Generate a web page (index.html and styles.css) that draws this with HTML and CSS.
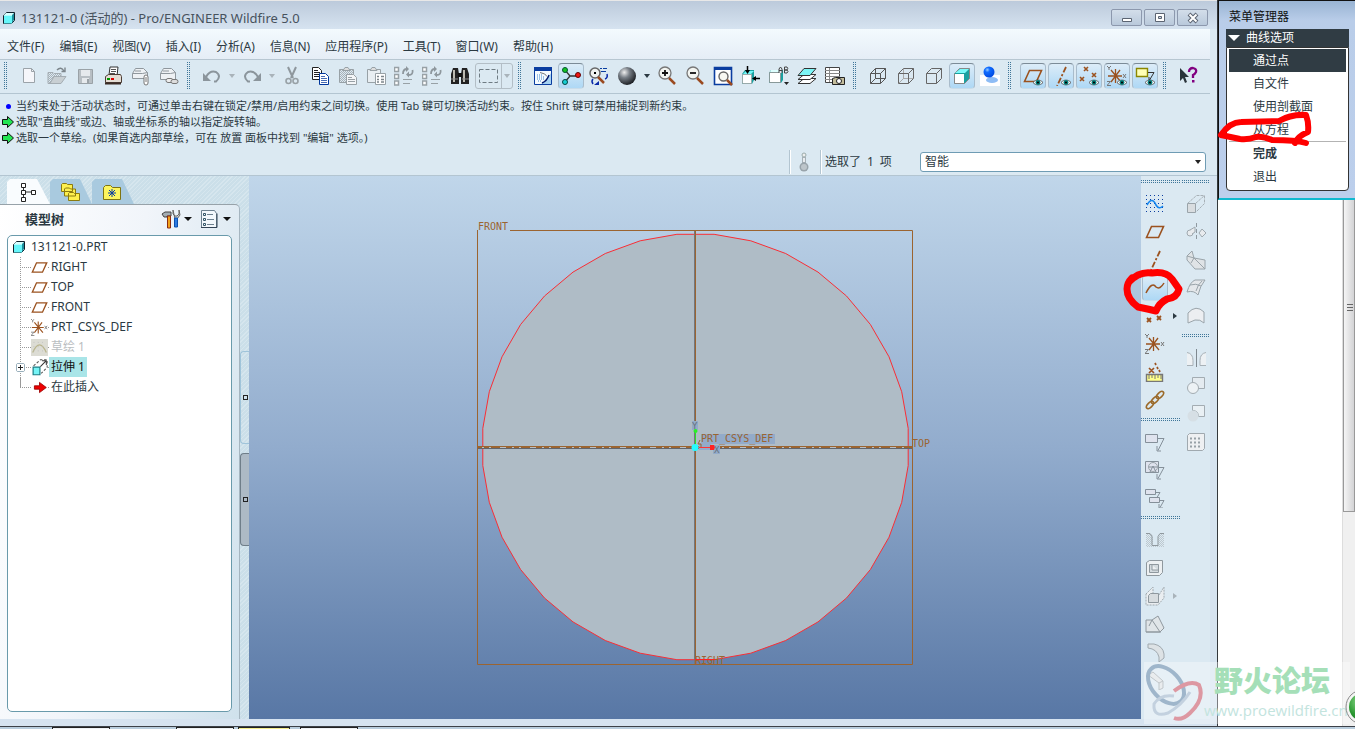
FILE: index.html
```html
<!DOCTYPE html>
<html lang="zh-CN">
<head>
<meta charset="utf-8">
<title>131121-0 (活动的) - Pro/ENGINEER Wildfire 5.0</title>
<link rel="stylesheet" href="styles.css">
</head>
<body>
<svg class="defs" aria-hidden="true">
  <defs>
    <pattern id="hatch" width="2" height="2" patternUnits="userSpaceOnUse"><path d="M0 0h1v1H0zM1 1h1v1H1z" fill="#a9b2b8"/></pattern>
    <radialGradient id="gball" cx=".35" cy=".3" r=".75"><stop offset="0" stop-color="#eee"/><stop offset=".4" stop-color="#777e86"/><stop offset="1" stop-color="#15181c"/></radialGradient>
    <radialGradient id="gblue" cx=".35" cy=".3" r=".75"><stop offset="0" stop-color="#9cf"/><stop offset=".3" stop-color="#0f6cff"/><stop offset="1" stop-color="#0048e0"/></radialGradient>
    <radialGradient id="ggreen" cx=".4" cy=".3" r=".8"><stop offset="0" stop-color="#8fd98c"/><stop offset=".6" stop-color="#2c9a33"/><stop offset="1" stop-color="#12701c"/></radialGradient>
  </defs>
  <symbol id="part" viewBox="0 0 14 14"><path d="M1.500 4.500l3-3h8v8l-3 3h-8z" fill="#fff" stroke="#10202c"/><path d="M2 4.500h8v8H2z" fill="#66f6fa"/><path d="M2 4l2-2h8l-2 2z" fill="#d6ffff"/><path d="M10 4l2-2v7l-2 3z" fill="#1c8f9c"/></symbol>
  <symbol id="eye" viewBox="0 0 11 7"><path d="M0 3.500C3 0 8 0 11 3.500 8 7 3 7 0 3.500z" fill="#fff" stroke="#333" stroke-width=".8"/><circle cx="5.500" cy="3.500" r="2.700" fill="#047f7c"/><circle cx="5.500" cy="3.500" r="1.200" fill="#000"/></symbol>
  <symbol id="new" viewBox="0 0 20 20"><path d="M4.500 2.500h8l3 3v11h-11z" fill="#f5f6fa" stroke="#9ba3a9"/><path d="M12.500 2.500v3h3" fill="none" stroke="#9ba3a9"/></symbol>
  <symbol id="open" viewBox="0 0 20 20"><path d="M1 6.500h5l1 1h7v3H7l-4 7H1z" fill="url(#hatch)" stroke="#a4adb3"/><path d="M7 10.500h12l-5 7H3z" fill="#c8cfd3" stroke="#a4adb3"/><path d="M10 4q4-4 7 1M14.500 5.500h3.500v-4" fill="none" stroke="#7c858b" stroke-width="1.400"/></symbol>
  <symbol id="save" viewBox="0 0 20 20"><path d="M3.500 3.500h14v14h-14z" fill="#b8bfc4" stroke="#9aa2a7"/><path d="M6 4h9v6H6zM7 12h7v5H7z" fill="#e6eaed"/><path d="M12 13h2v4h-2z" fill="#9aa2a7"/></symbol>
  <symbol id="print" viewBox="0 0 20 20"><path d="M6 9l1-8h8l-1 9z" fill="#fff" stroke="#333"/><path d="M8 3.500h5M8 5.500h5M7 7.500h5" stroke="#555"/><path d="M2.500 10.500l3-2h12l1 2v6h-16z" fill="#e4ddd4" stroke="#4c3d35"/><path d="M2 17.500h16" stroke="#3a2c26" stroke-width="2"/><path d="M4 12h3v2H4z" fill="#090"/><path d="M8 12h3v2H8z" fill="#d00"/></symbol>
  <symbol id="mail" viewBox="0 0 20 20"><path d="M1.500 7.500l3-5h8l4 4v6h-15z" fill="#eef1f4" stroke="#8f979d"/><path d="M1.500 7.500h10l5-1M4 5h6" stroke="#8f979d" fill="none"/><rect x="13" y="9" width="4" height="10" rx="2" fill="#fff" stroke="#777"/><path d="M15 11v5" stroke="#777"/></symbol>
  <symbol id="maillink" viewBox="0 0 20 20"><path d="M1.500 7.500l3-5h8l4 4v7h-15z" fill="#eef1f4" stroke="#8f979d"/><path d="M1.500 7.500h10l5-1M4 5h6" stroke="#8f979d" fill="none"/><rect x="7" y="12.500" width="7" height="4" rx="2" fill="#eee" stroke="#777"/><rect x="12" y="13.500" width="7" height="4" rx="2" fill="#ddd" stroke="#777"/></symbol>
  <symbol id="undo" viewBox="0 0 20 20"><path d="M4 11q4-7 10-5 6 4 0 9.500h-2" fill="none" stroke="#8b959c" stroke-width="2"/><path d="M1 7v8h8z" fill="#8b959c"/></symbol>
  <symbol id="redo" viewBox="0 0 20 20"><path d="M16 11q-4-7-10-5-6 4 0 9.500h2" fill="none" stroke="#8b959c" stroke-width="2"/><path d="M19 7v8h-8z" fill="#8b959c"/></symbol>
  <symbol id="cut" viewBox="0 0 20 20"><path d="M6 1l5 11M14 1L9 12" stroke="#8e979d" stroke-width="2"/><circle cx="6.500" cy="15" r="2.500" fill="none" stroke="#98a1a6" stroke-width="1.600"/><circle cx="13.500" cy="15" r="2.500" fill="none" stroke="#98a1a6" stroke-width="1.600"/></symbol>
  <symbol id="copy" viewBox="0 0 20 20"><path d="M2.500 1.500h6l3 3v9h-9z" fill="#fff" stroke="#222"/><path d="M4 4.500h4M4 6.500h6M4 8.500h6M4 10.500h6" stroke="#222"/><path d="M9.500 7.500h6l3 3v8h-9z" fill="#fff" stroke="#00369c"/><path d="M11 10.500h4M11 12.500h6M11 14.500h6M11 16.500h6" stroke="#456ab4"/></symbol>
  <symbol id="paste" viewBox="0 0 20 20"><path d="M1.500 3.500h14v13h-14z" fill="url(#hatch)" stroke="#98a1a6"/><path d="M5 4.500l2-3h3l2 3z" fill="#ddd" stroke="#98a1a6"/><path d="M8.500 8.500h7l3 3v7h-10z" fill="#f4f6f8" stroke="#98a1a6"/><path d="M10 11.500h4M10 13.500h7M10 15.500h7" stroke="#98a1a6"/></symbol>
  <symbol id="pastesp" viewBox="0 0 20 20"><path d="M1.500 3.500h13v13h-13z" fill="#e8eef2" stroke="#98a1a6"/><path d="M4 4.500l2-3h3l2 3z" fill="#ddd" stroke="#98a1a6"/><path d="M9.500 7.500h10v11h-10z" fill="#fff" stroke="#98a1a6"/><path d="M11 10.500h2M15 10.500h3M11 13.500h2M15 13.500h3M11 16h2M15 16h3" stroke="#7c858b" stroke-width="1.500"/></symbol>
  <symbol id="regen" viewBox="0 0 20 20"><path d="M.500 1.500h4v4h-4zM.500 8.500h4v4h-4zM.500 15h4v4h-4z" fill="#fff" stroke="#98a1a6" stroke-width="1.500"/><path d="M9 8q0-5 4-5M18.500 4q1 5-4 5" fill="none" stroke="#8e979d" stroke-width="1.800"/><path d="M12 0v6l3-3zM15 5.500v6l-3-3z" fill="#8e979d"/><path d="M9 13.500h9M9 17.500h7" stroke="#98a1a6"/></symbol>
  <symbol id="find" viewBox="0 0 20 20"><path d="M1 8l2-6h5l1 6v10H1zM11 8l1-6h5l2 6v10h-8z" fill="#222"/><path d="M8 7h4v4H8z" fill="#111"/><path d="M4 4v12M14 4v12" stroke="#e5e3d8" stroke-width="1.600"/><path d="M1 13h7M12 13h7" stroke="#888"/></symbol>
  <symbol id="marq" viewBox="0 0 20 20"><path d="M.500 3.500h18v13h-18z" fill="none" stroke="#6e7b83" stroke-dasharray="4 2"/></symbol>
  <symbol id="repaint" viewBox="0 0 20 20"><path d="M1.500 1.500h17v17h-17z" fill="#f6fbff" stroke="#0a3da0"/><path d="M1 1h18v4H1z" fill="#0a3da0"/><path d="M18 7v11H8l6-5z" fill="#a6d2f2"/><path d="M4 9h6M4 11h8M4 13h7M5 15h4" stroke="#3f86ca" stroke-dasharray="1 1"/><path d="M7 6.500q6 1 7 4" stroke="#777" fill="none"/><path d="M9 17q5-2 7-8" stroke="#02186c" stroke-width="1.400" fill="none"/></symbol>
  <symbol id="spin" viewBox="0 0 20 20"><path d="M4 4l5 6-5 6M9 10h9" fill="none" stroke="#333" stroke-width="1.300"/><circle cx="4" cy="4" r="2.500" fill="#13c322" stroke="#053"/><circle cx="4" cy="16" r="2.500" fill="#16cfd4" stroke="#044"/><circle cx="17" cy="9" r="2.500" fill="#ee1515" stroke="#600"/></symbol>
  <symbol id="orient" viewBox="0 0 20 20"><circle cx="6" cy="7" r="5" fill="#f0f3f0" stroke="#666" stroke-width="1.500"/><path d="M9 11l6 6" stroke="#9a4a20" stroke-width="2.500"/><path d="M5 6h2v2H5z" fill="#000"/><path d="M11 2.500h2M14 2.500h4M12 5.500h5" stroke="#0a3da0"/><path d="M18 8q1 4-2 5M4 18q-2-3 0-5" fill="none" stroke="#0a2aa8" stroke-width="1.500"/><path d="M5 19l5-4v4z" fill="#0a2aa8"/></symbol>
  <symbol id="ball" viewBox="0 0 20 20"><circle cx="10" cy="10" r="9" fill="url(#gball)"/></symbol>
  <symbol id="zin" viewBox="0 0 20 20"><circle cx="8" cy="7" r="6" fill="#f2f4f0" stroke="#777" stroke-width="1.300"/><path d="M5 7h6M8 4v6" stroke="#111" stroke-width="1.800"/><path d="M12 12l6 6" stroke="#9a4a20" stroke-width="2.500"/></symbol>
  <symbol id="zout" viewBox="0 0 20 20"><circle cx="8" cy="7" r="6" fill="#f2f4f0" stroke="#777" stroke-width="1.300"/><path d="M5 7h6" stroke="#111" stroke-width="1.800"/><path d="M12 12l6 6" stroke="#9a4a20" stroke-width="2.500"/></symbol>
  <symbol id="refit" viewBox="0 0 20 20"><path d="M1.500 1.500h17v17h-17z" fill="#fff" stroke="#0a3da0" stroke-width="1.600"/><path d="M1 1h18v3H1z" fill="#0a3da0"/><circle cx="10.500" cy="10.500" r="4.500" fill="#f7f7f2" stroke="#666" stroke-width="1.400"/><path d="M14 14l5 5" stroke="#9a4a20" stroke-width="2.500"/></symbol>
  <symbol id="reorient" viewBox="0 0 20 20"><path d="M1 8l3-4h9v10l-2 4H1z" fill="#1aa0a0"/><path d="M1.500 8.500h9v9h-9z" fill="#fff" stroke="#9aa"/><path d="M2 8l3-3h8l-3 3z" fill="#72f7f7"/><path d="M6.500 0v5M13 12.500h6" stroke="#000" stroke-width="1.500"/><path d="M4 4h5l-2.500 4zM15 10v5l-4-2.500z" fill="#000"/></symbol>
  <symbol id="saved" viewBox="0 0 20 20"><path d="M0 7l2-3h12v10l-2 3H0z" fill="#1aa0a0"/><path d="M.500 6.500h11v10H.500z" fill="#fff" stroke="#899"/><path d="M1 6l1-2h9l-1 2z" fill="#dff"/><path d="M15 16h5l-2.500 3z" fill="#222"/><path d="M10 7V3l1.500-2L13 3v4M10 4.500h3M15.500 7V1H18q1.500 1.500 0 3h-2.500H18q2 1.500 0 3z" fill="#dbe9f2" stroke="#444"/></symbol>
  <symbol id="layers" viewBox="0 0 20 20"><path d="M1 17.500h12l6-5H7z" fill="#fff" stroke="#333"/><path d="M1 13.500h12l6-5H7z" fill="#fff" stroke="#333"/><path d="M1 9.500h12l6-7H7z" fill="#7cf6f6" stroke="#333"/></symbol>
  <symbol id="viewmgr" viewBox="0 0 20 20"><path d="M.500 1.500h14v15h-14z" fill="#fff" stroke="#444"/><path d="M0 4.500h15M0 7.500h15M0 10.500h15M0 13.500h15M4.500 2v14" stroke="#888"/><path d="M7.500 12.500l3-1h9v7h-12z" fill="#c3bc9a" stroke="#222"/><circle cx="14" cy="15" r="2.500" fill="#fff" stroke="#222"/></symbol>
  <symbol id="wire" viewBox="0 0 20 20"><path d="M2.500 7.500h10v10h-10zM7.500 2.500h10v10h-10zM2.500 7.500l5-5M12.500 7.500l5-5M2.500 17.500l5-5M12.500 17.500l5-5" fill="none" stroke="#555"/></symbol>
  <symbol id="hidden" viewBox="0 0 20 20"><path d="M7.500 3v9.500H17M3 17l5-5" fill="none" stroke="#aaa"/><path d="M2.500 7.500h10v10h-10zM2.500 7.500l5-5h10v10l-5 5M12.500 7.500l5-5" fill="none" stroke="#666"/></symbol>
  <symbol id="nohid" viewBox="0 0 20 20"><path d="M2.500 7.500h10v10h-10zM2.500 7.500l5-5h10v10l-5 5M12.500 7.500l5-5" fill="none" stroke="#666"/></symbol>
  <symbol id="shade" viewBox="0 0 20 20"><path d="M2.500 7.500l5-5h10v10l-5 5h-10z" fill="#1aa0a0" stroke="#888"/><path d="M3 8h9v9H3z" fill="#fff"/><path d="M3 7l5-4h9l-4 4z" fill="#7cf9f9"/></symbol>
  <symbol id="real" viewBox="0 0 20 20"><path d="M0 9h20v11H0z" fill="#fff"/><ellipse cx="12" cy="14" rx="6" ry="3" fill="#8dbcf5"/><circle cx="9" cy="6" r="5.500" fill="url(#gblue)"/></symbol>
  <symbol id="plane" viewBox="0 0 20 20"><path d="M1.500 15.500L6.500 4.500h12l-5 11z" fill="none" stroke="#9b521f" stroke-width="1.600"/></symbol>
  <symbol id="axis" viewBox="0 0 20 20"><path d="M15 1L6 20" stroke="#9b521f" stroke-width="1.800" stroke-dasharray="6 2 2 2"/></symbol>
  <symbol id="points" viewBox="0 0 20 20"><path d="M5 1l4 4M9 1L5 5M13 7l4 4M17 7l-4 4M1 11l4 4M5 11l-4 4" stroke="#9b521f" stroke-width="1.600"/></symbol>
  <symbol id="csys" viewBox="0 0 20 20"><path d="M8.500 3v14M1 10h14M4 4l10 12M13 4L4 16" stroke="#9b521f" stroke-width="1.300"/><path d="M0 0l2 2 2-2M2 2v2M16 8l3 4M19 8l-3 4M0 15.500h3.500L0 19.500h4" fill="none" stroke="#777"/></symbol>
  <symbol id="note" viewBox="0 0 20 20"><path d="M1.500 2.500h11v8h-11z" fill="#ffffb5" stroke="#8b8700" stroke-width="1.400"/><path d="M13 6.500h6L14 15M14 11v4h4" fill="none" stroke="#333"/></symbol>
  <symbol id="help" viewBox="0 0 20 20"><path d="M2 2v13l3-3 2 5 2-1-2-5h4z" fill="#29333a"/><path d="M11 6q0-4 4-4 4 1 3 4-1 2-3 3v3" fill="none" stroke="#800080" stroke-width="2.300"/><path d="M14 14h2.500v2.500H14z" fill="#800080"/></symbol>
  <symbol id="sketch" viewBox="0 0 20 20"><path d="M1.500 1v19M5.500 1v19M9.500 1v19M13.500 1v19M17.500 1v19" stroke="#0a3da0" stroke-dasharray="1 3"/><path d="M2 11q5-9 9 0 3 5 7 1" fill="none" stroke="#1486ee" stroke-width="1.600"/></symbol>
  <symbol id="curve" viewBox="0 0 20 20"><path d="M1 15q6-12 10-6 4 3 8-4" fill="none" stroke="#9b521f" stroke-width="1.500"/></symbol>
  <symbol id="pts2" viewBox="0 0 20 20"><path d="M2 12l4 4M6 12l-4 4M12 10l4 4M16 10l-4 4" stroke="#9b521f" stroke-width="1.800"/></symbol>
  <symbol id="analysis" viewBox="0 0 20 20"><path d="M1.500 12.500h16v7h-16z" fill="#ffff8a" stroke="#777" stroke-width="1.400"/><path d="M4 13v4M7 13v3M10 13v4M13 13v3M16 13v4" stroke="#777"/><path d="M4 6l5 5M9 6l-5 5M10 1l1 2M12 5l1 2M14 8l1 2" stroke="#9b521f" stroke-width="1.700"/></symbol>
  <symbol id="chain" viewBox="0 0 20 20"><g fill="none" stroke="#9b6a2a" stroke-width="1.600"><ellipse cx="5" cy="15" rx="4.500" ry="2.300" transform="rotate(-45 5 15)"/><ellipse cx="10" cy="10" rx="4.500" ry="2.300" transform="rotate(-45 10 10)"/><ellipse cx="15" cy="5" rx="4.500" ry="2.300" transform="rotate(-45 15 5)"/></g></symbol>
  <symbol id="ann1" viewBox="0 0 20 20"><path d="M.500 2.500h12v8h-12z" fill="#dfe3ee" stroke="#85909a"/><path d="M13 6.500h6l-6 12M12 14v5h4" fill="none" stroke="#85909a"/></symbol>
  <symbol id="ann2" viewBox="0 0 20 20"><path d="M.500 1.500h13v11h-13z" fill="#dfe3ee" stroke="#85909a"/><circle cx="8" cy="7" r="4.500" fill="none" stroke="#9aa4aa"/><path d="M5 12l3-6 3 6M4 7h8M14 7.500h5l-6 11M12 14v5h4" fill="none" stroke="#85909a"/></symbol>
  <symbol id="ann3" viewBox="0 0 20 20"><path d="M.500 1.500h10v5h-10zM4.500 9.500h10v5h-10z" fill="#dfe3ee" stroke="#85909a"/><path d="M11 4.500h4l-3 5M15 12.500h4l-4 7M14 16v4h4" fill="none" stroke="#85909a"/></symbol>
  <symbol id="extrude" viewBox="0 0 20 20"><path d="M1.500 9.500h8v9h-8z" fill="#d9dde0" stroke="#9aa4aa"/><path d="M1.500 9.500l9-8h8v8l-9 9M9.500 9.500l9-8" fill="none" stroke="#a8b1b7" stroke-dasharray="3 1"/></symbol>
  <symbol id="revolve" viewBox="0 0 20 20"><path d="M10.500 1v18" stroke="#8f99a0" stroke-dasharray="4 2"/><circle cx="4" cy="11" r="3" fill="#e8ebee" stroke="#a0a9af"/><path d="M13 11l3-4 4 4-4 4zM4 8l5-3v5l-3 2" fill="#e8ebee" stroke="#a0a9af"/></symbol>
  <symbol id="sweep" viewBox="0 0 20 20"><path d="M1 6l5-5 2 7 11 2v9H9L1 10z" fill="#dfe3e6" stroke="#9aa4aa"/><path d="M8 8L1 6M8 8l11 11M8 8l-3 5" stroke="#9aa4aa"/></symbol>
  <symbol id="boundary" viewBox="0 0 20 20"><path d="M1 14q3-10 8-12l10 0q-5 6-7 15-4-5-11-3zM4 7q6-2 11 1M10 13q2-7 6-10" fill="#e4e7ea" stroke="#9aa4aa"/></symbol>
  <symbol id="style" viewBox="0 0 20 20"><path d="M2 7q8-9 16-1v11q-4-4-9-3l-7 3z" fill="#eceef1" stroke="#9aa4aa"/></symbol>
  <symbol id="mirror" viewBox="0 0 20 20"><path d="M10.500 1v18" stroke="#7f8990"/><path d="M1 4.500q6 1 6 8v5H1M20 4.500q-6 1-6 8v5h6" fill="#edf1f4" stroke="#a8b1b7"/></symbol>
  <symbol id="merge" viewBox="0 0 20 20"><path d="M6.500 1.500h12v11h-12z" fill="#e4ebf0" stroke="#a3acb2"/><circle cx="7" cy="12" r="5.500" fill="#edf2f5" stroke="#a3acb2"/></symbol>
  <symbol id="trim" viewBox="0 0 20 20"><path d="M6.500 1.500h12v11h-6q0-6-6-6z" fill="#e9f0f4" stroke="#a3acb2"/><circle cx="7" cy="12" r="5.500" fill="#d6dfe5"/></symbol>
  <symbol id="patt" viewBox="0 0 20 20"><path d="M1.500 3.500l2-2h15v15l-2 2h-15z" fill="#eef0f2" stroke="#a0a9af"/><path d="M4 6.500h12M4 10.500h12M4 14.500h12" stroke="#98a1a7" stroke-width="2" stroke-dasharray="2 2"/></symbol>
  <symbol id="hole" viewBox="0 0 20 20"><path d="M1 4h5l2 2v10h5V6l2-2h4v13H1z" fill="url(#hatch)" opacity=".6"/><path d="M1 3.500h4l2 3v9h6v-9l2-3h4" fill="none" stroke="#8f989e"/></symbol>
  <symbol id="shell" viewBox="0 0 20 20"><path d="M1.500 4.500l3-2h13v12l-3 3h-13z" fill="#edf0f2" stroke="#8f989e"/><path d="M4.500 6.500h9v8h-9zM7 7v5h6" fill="#d3dade" stroke="#8f989e"/></symbol>
  <symbol id="rib" viewBox="0 0 20 20"><path d="M1 8l7-7v8h6l5-8v11l-6 7H1z" fill="#eaeef1" stroke="#a0a9af" stroke-dasharray="2 1"/><path d="M3.500 9.500l2-2h8v9h-10z" fill="#d7dcdf" stroke="#8f989e"/></symbol>
  <symbol id="draft" viewBox="0 0 20 20"><path d="M1 6h6l6-4 6 12-4 4H1z" fill="#e0e5e8" stroke="#8f989e"/><path d="M7 6l8 12M7 6l-3 6M1 18h15" fill="none" stroke="#8f989e"/></symbol>
  <symbol id="round" viewBox="0 0 20 20"><path d="M3 2h6q9 2 10 10v4l-5 4v-5Q12 7 3 6z" fill="#dde2e5" stroke="#a0a9af"/></symbol>
  <symbol id="chamfer" viewBox="0 0 20 20"><path d="M3 5l5-3 10 9v7l-4 2v-7z" fill="#dde2e5" stroke="#a0a9af"/><path d="M14 13l4-2" stroke="#a0a9af"/></symbol>
  <symbol id="treeic" viewBox="0 0 20 20"><path d="M5.500 4v12M6 10h9" stroke="#333"/><path d="M3.500 1.500h4v4h-4zM3.500 8.500h4v4h-4zM3.500 15.500h4v4h-4zM13.500 8.500h4v4h-4z" fill="#fff" stroke="#222"/></symbol>
  <symbol id="folders" viewBox="0 0 20 20"><path d="M.500 2.500l1-1h4l1 1h5v7H.500zM3.500 7l1-1h4l1 1h5v7h-11zM7.500 11.500l1-1h4l1 1h5v7h-11z" fill="#fdf04e" stroke="#8a7b10"/></symbol>
  <symbol id="favs" viewBox="0 0 20 20"><path d="M.500 5.500l2-2h5l2 2h8v12H.500z" fill="#fdf55e" stroke="#7f7412"/><path d="M9 7v8M5 11h8M6 8l6 6M12 8l-6 6" stroke="#0a3da0"/></symbol>
  <symbol id="tools" viewBox="0 0 20 20"><path d="M1 5l3-2h6v4H6v1H3z" fill="#a3adb2" stroke="#444"/><path d="M6.500 7h3v12h-3z" fill="#f1a21a" stroke="#8d2b10"/><path d="M12 1v4l2 2h2l2-2V1l1 5-3 4h-2z" fill="#ccc" stroke="#666"/><path d="M13.500 9h3v9h-3z" fill="#2b7ae0" stroke="#0b4fae"/></symbol>
  <symbol id="listic" viewBox="0 0 20 20"><path d="M1.500 1.500h13l2 3v14h-15z" fill="#f3f8fc" stroke="#6d8190"/><path d="M1 18.500h16v-14" stroke="#345" fill="none"/><path d="M7 5.500h6M7 10.500h7M7 15.500h7" stroke="#6d8190"/><path d="M3.500 4.500h2v2h-2zM3.500 9.500h2v2h-2zM3.500 14.500h2v2h-2z" fill="none" stroke="#356"/></symbol>
  <symbol id="sketchoff" viewBox="0 0 20 20"><path d="M0 0h20v20H0z" fill="#dcdcd4"/><path d="M2 16q8-18 16 0" fill="none" stroke="#b9b58e" stroke-width="1.500"/><path d="M3 4h15M3 9h15M3 14h15" stroke="#bbb" stroke-dasharray="1 4"/></symbol>
  <symbol id="extr2" viewBox="0 0 20 20"><path d="M2.500 9.500h8v9h-8z" fill="#76f4f6" stroke="#1b7d85" stroke-width="1.400"/><path d="M3 8l8-7h8v9l-7 7" fill="none" stroke="#555" stroke-width="1.200" stroke-dasharray="3 2"/><path d="M11 9l7-7M13 2h5v5" fill="none" stroke="#333" stroke-width="1.200"/></symbol>
  <symbol id="redarrow" viewBox="0 0 20 20"><path d="M4 8h6V4l8 6-8 6v-4H4z" fill="#ee0000" stroke="#900"/></symbol>
  <symbol id="garrow" viewBox="0 0 12 12"><path d="M.500 3.500h5v-3l6 5.500-6 5.500v-3h-5z" fill="#22e552" stroke="#111"/></symbol>
  <symbol id="thermo" viewBox="0 0 20 20"><circle cx="9" cy="3" r="2" fill="#eee" stroke="#9aa"/><path d="M7 5h4v7H7z" fill="#a6b0b6"/><path d="M8 6h2v4H8z" fill="#e8ecef"/><circle cx="9" cy="15" r="4.500" fill="#98a3aa"/><circle cx="9" cy="15" r="3" fill="#bdc5ca"/></symbol>
</svg>

<div class="screen">
  <section class="app">
    <header class="titlebar">
      <svg class="i14"><use href="#part"/></svg>
      <h1>131121-0 (活动的) - Pro/ENGINEER Wildfire 5.0</h1>
      <div class="winbtns">
        <button aria-label="最小化"><svg viewBox="0 0 16 12"><path d="M3.500 6.500h9v3h-9z" fill="#fff" stroke="#5b6472"/></svg></button>
        <button aria-label="最大化"><svg viewBox="0 0 16 12"><path d="M3.500 1.500h9v8h-9z" fill="#fff" stroke="#5b6472"/><path d="M6.500 4.500h3v2h-3z" fill="#ccd7e5" stroke="#5b6472"/></svg></button>
        <button aria-label="关闭"><svg viewBox="0 0 16 12"><path d="M4 2l8 8M12 2l-8 8" stroke="#5b6472" stroke-width="4"/><path d="M4.500 2.500l7 7M11.500 2.500l-7 7" stroke="#fff" stroke-width="2"/></svg></button>
      </div>
    </header>

    <nav class="menubar">
      <button>文件(F)</button><button>编辑(E)</button><button>视图(V)</button><button>插入(I)</button><button>分析(A)</button><button>信息(N)</button><button>应用程序(P)</button><button>工具(T)</button><button>窗口(W)</button><button>帮助(H)</button>
    </nav>

    <div class="toolbar">
      <i class="grip"></i>
      <button class="tb" aria-label="新建"><svg><use href="#new"/></svg></button>
      <button class="tb" aria-label="打开"><svg><use href="#open"/></svg></button>
      <button class="tb" aria-label="保存"><svg><use href="#save"/></svg></button>
      <button class="tb" aria-label="打印"><svg><use href="#print"/></svg></button>
      <button class="tb" aria-label="发送"><svg><use href="#mail"/></svg></button>
      <button class="tb" aria-label="发送链接"><svg><use href="#maillink"/></svg></button>
      <i class="grip"></i>
      <button class="tb" aria-label="撤消"><svg><use href="#undo"/></svg></button>
      <button class="drop off" aria-label="撤消列表"></button>
      <button class="tb" aria-label="重做"><svg><use href="#redo"/></svg></button>
      <button class="drop off" aria-label="重做列表"></button>
      <button class="tb" aria-label="剪切"><svg><use href="#cut"/></svg></button>
      <button class="tb" aria-label="复制"><svg><use href="#copy"/></svg></button>
      <button class="tb" aria-label="粘贴"><svg><use href="#paste"/></svg></button>
      <button class="tb" aria-label="选择性粘贴"><svg><use href="#pastesp"/></svg></button>
      <button class="tb" aria-label="再生"><svg><use href="#regen"/></svg></button>
      <button class="tb" aria-label="再生管理器"><svg><use href="#regen"/></svg></button>
      <button class="tb" aria-label="查找"><svg><use href="#find"/></svg></button>
      <span class="combo"><button class="marq" aria-label="框选"><svg><use href="#marq"/></svg></button><button class="drop off" aria-label="选择方式"></button></span>
      <i class="grip"></i>
      <button class="tb" aria-label="重画"><svg><use href="#repaint"/></svg></button>
      <button class="tb on" aria-label="旋转中心"><svg><use href="#spin"/></svg></button>
      <button class="tb" aria-label="定向模式"><svg><use href="#orient"/></svg></button>
      <button class="tb" aria-label="外观库"><svg><use href="#ball"/></svg></button>
      <button class="drop" aria-label="外观列表"></button>
      <button class="tb" aria-label="放大"><svg><use href="#zin"/></svg></button>
      <button class="tb" aria-label="缩小"><svg><use href="#zout"/></svg></button>
      <button class="tb" aria-label="重新调整"><svg><use href="#refit"/></svg></button>
      <button class="tb" aria-label="重定向"><svg><use href="#reorient"/></svg></button>
      <button class="tb" aria-label="已保存视图"><svg><use href="#saved"/></svg></button>
      <button class="tb" aria-label="层"><svg><use href="#layers"/></svg></button>
      <button class="tb" aria-label="视图管理器"><svg><use href="#viewmgr"/></svg></button>
      <i class="grip"></i>
      <button class="tb" aria-label="线框"><svg><use href="#wire"/></svg></button>
      <button class="tb" aria-label="隐藏线"><svg><use href="#hidden"/></svg></button>
      <button class="tb" aria-label="无隐藏线"><svg><use href="#nohid"/></svg></button>
      <button class="tb on" aria-label="着色"><svg><use href="#shade"/></svg></button>
      <button class="tb" aria-label="增强的真实感"><svg><use href="#real"/></svg></button>
      <i class="grip"></i>
      <button class="tb on" aria-label="平面显示"><svg><use href="#plane"/><use href="#eye" x="10" y="13" width="10" height="7"/></svg></button>
      <button class="tb on" aria-label="轴显示"><svg><use href="#axis"/><use href="#eye" x="10" y="13" width="10" height="7"/></svg></button>
      <button class="tb on" aria-label="点显示"><svg><use href="#points"/><use href="#eye" x="10" y="13" width="10" height="7"/></svg></button>
      <button class="tb on" aria-label="坐标系显示"><svg><use href="#csys"/><use href="#eye" x="10" y="13" width="10" height="7"/></svg></button>
      <button class="tb on" aria-label="注释显示"><svg><use href="#note"/><use href="#eye" x="10" y="13" width="10" height="7"/></svg></button>
      <i class="grip"></i>
      <button class="tb" aria-label="上下文帮助"><svg><use href="#help"/></svg></button>
    </div>

    <div class="messages">
      <p><span class="dot"></span>当约束处于活动状态时，可通过单击右键在锁定/禁用/启用约束之间切换。使用 Tab 键可切换活动约束。按住 Shift 键可禁用捕捉到新约束。</p>
      <p><svg class="i12"><use href="#garrow"/></svg>选取"直曲线"或边、轴或坐标系的轴以指定旋转轴。</p>
      <p><svg class="i12"><use href="#garrow"/></svg>选取一个草绘。(如果首选内部草绘，可在 放置 面板中找到 "编辑" 选项。)</p>
      <div class="status">
        <span class="cell"><svg class="i20"><use href="#thermo"/></svg></span>
        <label class="cell count" for="filter">选取了&ensp;1&ensp;项</label>
        <span class="selwrap"><select id="filter"><option>智能</option></select></span>
      </div>
    </div>

    <main class="work">
      <aside class="navigator">
        <div class="tabs">
          <button class="tab cur" aria-label="模型树"><svg class="i20"><use href="#treeic"/></svg></button>
          <button class="tab" aria-label="文件夹浏览器"><svg class="i20"><use href="#folders"/></svg></button>
          <button class="tab" aria-label="收藏夹"><svg class="i20"><use href="#favs"/></svg></button>
        </div>
        <div class="panel">
          <div class="panelhead">
            <h2>模型树</h2>
            <button class="pb" aria-label="设置"><svg class="i20"><use href="#tools"/></svg><span class="tri"></span></button>
            <button class="pb" aria-label="显示"><svg class="i20"><use href="#listic"/></svg><span class="tri"></span></button>
          </div>
          <div class="treebox">
            <div class="root"><svg class="i14"><use href="#part"/></svg>131121-0.PRT</div>
            <ul class="tree">
              <li><svg class="i16"><use href="#plane"/></svg><span>RIGHT</span></li>
              <li><svg class="i16"><use href="#plane"/></svg><span>TOP</span></li>
              <li><svg class="i16"><use href="#plane"/></svg><span>FRONT</span></li>
              <li><svg class="i16"><use href="#csys"/></svg><span>PRT_CSYS_DEF</span></li>
              <li class="dim"><svg class="i16"><use href="#sketchoff"/></svg><span>草绘 1</span></li>
              <li class="sel"><button class="exp" aria-label="展开"><svg viewBox="0 0 7 7"><path d="M1 3.500h5M3.500 1v5" stroke="#222"/></svg></button><svg class="i16"><use href="#extr2"/></svg><span>拉伸 1</span></li>
              <li><svg class="i16"><use href="#redarrow"/></svg><span>在此插入</span></li>
            </ul>
          </div>
        </div>
        <div class="sash"><i></i><i class="dark"></i></div>
      </aside>

      <div class="canvas">
        <svg viewBox="0 0 892 543" preserveAspectRatio="xMidYMid meet" role="img" aria-label="模型视图">
          <polygon class="disc" points="427.900,58.300 465.100,58.300 501.800,64.800 536.700,77.500 569,96.100 597.500,120 621.400,148.500 640,180.800 652.700,215.700 659.200,252.400 659.200,289.600 652.700,326.300 640,361.200 621.400,393.500 597.500,422 569,445.900 536.700,464.500 501.800,477.200 465.100,483.700 427.900,483.700 391.200,477.200 356.300,464.500 324,445.900 295.500,422 271.600,393.500 253,361.200 240.300,326.300 233.800,289.600 233.800,252.400 240.300,215.700 253,180.800 271.600,148.500 295.500,120 324,96.100 356.300,77.500 391.200,64.800"/>
          <path class="datum" d="M261 54.500H663.500V488.500H228.500V54"/>
          <path d="M445.500 55v433" stroke="#72767d"/><path class="datum" d="M446.500 55v433"/>
          <path d="M229 272.500h434" stroke="#61656d"/><path d="M229 271h434" stroke="#9b6430" stroke-width="2"/><path d="M233 271.500h426" stroke="#b9bfc3" stroke-dasharray="2 5 2 9 6 6"/>
          <g fill="#93abc9"><path d="M452 258h74v10h-74zM443 245h6v9h-6zM464 269h7v9h-7zM450 267h12v7h-12z"/></g>
          <path d="M446.500 271v-16" stroke="#28e628"/><circle cx="446.500" cy="255" r="2" fill="#28f028"/>
          <path d="M446 271.500h17" stroke="#f33"/><path d="M461 269h4l1 2-1 3h-4z" fill="#f22"/>
          <circle cx="446" cy="271.500" r="3.500" fill="#27faff"/>
          <path d="M451 264l-2 4h3v3" fill="none" stroke="#9b6430"/>
          <g class="dtext"><text x="229" y="54">FRONT</text><text x="663" y="271">TOP</text><text x="452" y="266">PRT_CSYS_DEF</text><text x="446" y="488">RIGHT</text></g>
          <g class="axes"><text x="443" y="253">Y</text><text x="465" y="277">X</text></g>
          <path d="M446 483.500h20" stroke="#f22"/>
        </svg>
      </div>

      <div class="sidebars">
        <div class="vbar wide">
          <i class="hgrip"></i>
          <button class="tb" aria-label="草绘"><svg><use href="#sketch"/></svg></button>
          <button class="tb" aria-label="基准平面"><svg><use href="#plane"/></svg></button>
          <button class="tb" aria-label="基准轴"><svg><use href="#axis"/></svg></button>
          <button class="tb on" aria-label="基准曲线"><svg><use href="#curve"/></svg></button>
          <button class="tb fly" aria-label="基准点"><svg><use href="#pts2"/></svg></button>
          <button class="tb" aria-label="坐标系"><svg><use href="#csys"/></svg></button>
          <button class="tb" aria-label="分析"><svg><use href="#analysis"/></svg></button>
          <button class="tb" aria-label="参照"><svg><use href="#chain"/></svg></button>
          <i class="hgrip"></i>
          <button class="tb" aria-label="注释"><svg><use href="#ann1"/></svg></button>
          <button class="tb" aria-label="注释区域"><svg><use href="#ann2"/></svg></button>
          <button class="tb" aria-label="数据目标"><svg><use href="#ann3"/></svg></button>
          <i class="hgrip"></i>
          <button class="tb" aria-label="孔"><svg><use href="#hole"/></svg></button>
          <button class="tb" aria-label="壳"><svg><use href="#shell"/></svg></button>
          <button class="tb fly off" aria-label="筋"><svg><use href="#rib"/></svg></button>
          <button class="tb" aria-label="拔模"><svg><use href="#draft"/></svg></button>
          <button class="tb" aria-label="倒圆角"><svg><use href="#round"/></svg></button>
          <button class="tb" aria-label="倒角"><svg><use href="#chamfer"/></svg></button>
        </div>
        <div class="vbar">
          <i class="hgrip"></i>
          <button class="tb" aria-label="拉伸"><svg><use href="#extrude"/></svg></button>
          <button class="tb" aria-label="旋转"><svg><use href="#revolve"/></svg></button>
          <button class="tb" aria-label="扫描"><svg><use href="#sweep"/></svg></button>
          <button class="tb" aria-label="边界混合"><svg><use href="#boundary"/></svg></button>
          <button class="tb" aria-label="造型"><svg><use href="#style"/></svg></button>
          <i class="hgrip"></i>
          <button class="tb" aria-label="镜像"><svg><use href="#mirror"/></svg></button>
          <button class="tb" aria-label="合并"><svg><use href="#merge"/></svg></button>
          <button class="tb" aria-label="修剪"><svg><use href="#trim"/></svg></button>
          <button class="tb" aria-label="阵列"><svg><use href="#patt"/></svg></button>
        </div>
      </div>
    </main>
  </section>

  <section class="side">
    <div class="manager">
      <h2>菜单管理器</h2>
      <h3><span class="tri white"></span>曲线选项</h3>
      <div class="options">
        <button class="cur">通过点</button>
        <button>自文件</button>
        <button>使用剖截面</button>
        <button>从方程</button>
        <hr>
        <button class="bold">完成</button>
        <button>退出</button>
      </div>
    </div>
    <div class="page"><div class="scroll"><span class="thumb"></span></div></div>
  </section>
  <footer class="taskbar"><i></i><i></i><i class="y"></i><i></i></footer>
</div>

<svg class="ink circle" viewBox="0 0 62 48" aria-hidden="true"><path d="M7 15Q17 4 30 6q14-2 20 6l7 10q-2 9-12 10-8 4-11 12-8-2-18-4Q5 32 5 22 5 16 10 11"/></svg>
<svg class="ink loop" viewBox="0 0 98 42" aria-hidden="true"><path d="M5 23Q14 10 25 10l38-1q12-7 27-6 3 8 2 17-10 4-13 11M90 31q-10-3-34-3-10-4-16-3-8 3-16 2L5 23"/></svg>

<div class="watermark">
  <svg viewBox="0 0 60 60" aria-hidden="true"><g fill="none" stroke-width="4"><ellipse cx="22" cy="23" rx="14" ry="22" transform="rotate(-42 22 23)" stroke="#9fb6cb"/><path d="M30 29Q46 17 55 23q6 14-9 28-8 8-16 5" stroke="#dd98a2"/><path d="M30 34q-14-2-20 8-1 14 14 9 14-8 22-21" stroke="#c3d1df" stroke-width="3"/></g></svg>
  <div><strong>野火论坛</strong><span>www.proewildfire.cn</span></div>
</div>
<svg class="orb" viewBox="0 0 10 40" aria-hidden="true"><circle cx="18" cy="20" r="17" fill="#f4f4f4" stroke="#888"/><circle cx="18" cy="20" r="14" fill="url(#ggreen)"/></svg>
</body>
</html>
```
FILE: styles.css
```css
* { box-sizing: border-box; }
html, body { margin: 0; height: 100%; overflow: hidden; }
body { font: 12px/16px "Noto Sans", "Noto Sans CJK SC", sans-serif; color: #2b3942; background: #fff; position: relative; }
h1, h2, h3, p, ul { margin: 0; padding: 0; font-weight: normal; font-size: 12px; }
button { font: inherit; color: inherit; background: none; border: 0; padding: 0; margin: 0; }
.defs { position: absolute; width: 0; height: 0; }
.i12 { width: 12px; height: 12px; }
.i14 { width: 14px; height: 14px; }
.i16 { width: 17px; height: 17px; }
.i20 { width: 20px; height: 20px; }
.i12, .i14, .i16, .i20 { flex: none; display: block; }

.screen { display: grid; grid-template-columns: minmax(0, 1fr) 137px; grid-template-rows: minmax(0, 1fr) 3px; height: 100%; }
.app { display: flex; flex-direction: column; min-height: 0; background: #dbe9f2; border-right: 1px solid #33373c; }

.titlebar { display: flex; align-items: center; gap: 5px; height: 29px; padding: 5px 9px 0 2px; background: linear-gradient(#bccadb, #d6e3f0); border-top: 1px solid #e8e8e8; color: #47525d; flex: none; }
.titlebar h1 { flex: 1; font-size: 13px; }
.winbtns { display: flex; gap: 2px; }
.winbtns button { width: 31px; height: 17px; border: 1px solid #8c98ad; border-radius: 2px; background: linear-gradient(#d3deea, #b9c9db); display: grid; place-items: center; }
.winbtns svg { width: 16px; height: 12px; }

.menubar { display: flex; align-items: center; gap: 15px; height: 31px; padding: 5px 7px 0; margin-right: 7px; background: linear-gradient(#f3fafe, #e5edf6); border-bottom: 1px solid #b7c6d1; flex: none; }

.toolbar { display: flex; align-items: center; height: 34px; padding-bottom: 2px; margin-right: 7px; border-bottom: 1px solid #b3c5d1; flex: none; }
.grip { width: 15px; height: 27px; flex: none; background: conic-gradient(from 270deg, #3f7699 90deg, transparent 0) 0 0 / 2px 2px; clip-path: inset(0 7px 0 4px); }
.tb { width: 28px; height: 28px; flex: none; display: grid; place-items: center; border: 1px solid transparent; border-radius: 4px; }
.tb svg { width: 20px; height: 20px; display: block; }
.tb.on { width: 26px; height: 26px; margin: 1px; border-color: #7b8b97 #a9bccb #c8dcea; background: linear-gradient(#dcecf8, #aed8f5); }
.drop { width: 12px; height: 20px; display: grid; place-items: center; flex: none; }
.drop::after { content: ""; border: 3px solid transparent; border-top: 4px solid #2b3942; border-bottom: 0; }
.drop.off::after { border-top-color: #a9b3ba; }
.combo { display: flex; width: 38px; height: 26px; margin: 0 1px; border: 1px solid #b3bec6; border-radius: 3px; flex: none; }
.marq { width: 26px; border-right: 1px solid #b3bec6; display: grid; place-items: center; }
.marq svg { width: 20px; height: 20px; }
.combo .drop { width: 10px; height: 24px; }

.messages { padding: 4px 7px 0 2px; border-bottom: 1px solid #b3c5d1; flex: none; height: 82px; }
.messages p { display: flex; align-items: center; gap: 2px; height: 16px; white-space: nowrap; font-size: 11px; }
.dot { width: 5px; height: 5px; margin: 0 3px 0 4px; border-radius: 3px; background: #00f; }
.status { display: flex; justify-content: flex-end; align-items: center; height: 26px; margin-top: 3px; padding-right: 4px; }
.cell { display: flex; align-items: center; height: 24px; padding: 0 5px; border-left: 1px solid #b3c5d1; box-shadow: inset 1px 0 #fff; }
.count { width: 100px; padding: 0 4px; }
.selwrap { position: relative; width: 286px; }
.selwrap select { width: 100%; height: 20px; appearance: none; font: inherit; line-height: 16px; color: inherit; padding: 0 4px; border: 1px solid #6f9cb4; border-radius: 3px; background: #fff; display: block; }
.selwrap::after { content: ""; position: absolute; right: 5px; top: 8px; border: 3px solid transparent; border-top: 4px solid #222; border-bottom: 0; }

.work { display: flex; flex: 1; min-height: 0; padding-bottom: 7px; background: #d6e3f0; }
.navigator { width: 249px; flex: none; display: grid; grid-template-columns: 240px 9px; grid-template-rows: 28px minmax(0, 1fr); background: repeating-linear-gradient(135deg, #cbdfe9 0 2px, #d6e6ee 2px 3px); }
.tabs { display: flex; padding: 3px 0 0 7px; grid-column: 1 / 3; }
.tab { width: 42px; height: 25px; padding-left: 11px; background: #a9cadf; clip-path: polygon(0 3px, 3px 0, 30px 0, 100% 100%, 0 100%); }
.tab.cur { background: #f9fcfe; width: 43px; }
.panel { border-top: 1px solid #97a2a9; border-right: 1px solid #a5b5c0; border-radius: 0 5px 0 0; padding: 0 7px 7px; display: flex; flex-direction: column; background: linear-gradient(100deg, #fff 0, #f1f5fa 45%, #cfe1ec 100%); }
.panelhead { display: flex; align-items: center; gap: 8px; height: 30px; padding: 0 1px 2px 0; flex: none; }
.panelhead h2 { flex: 1; padding-left: 18px; font-weight: bold; font-size: 13px; }
.pb { display: flex; align-items: center; gap: 3px; }
.tri { border: 4px solid transparent; border-top: 4px solid #111; border-bottom: 0; }
.treebox { flex: 1; min-height: 0; border: 1px solid #699aab; border-radius: 5px; background: #fff; padding: 1px 4px; }
.root { display: flex; align-items: center; gap: 5px; height: 20px; }
.tree { list-style: none; margin-left: 8px; }
.tree li { display: flex; align-items: center; gap: 1px; height: 20px; position: relative; padding-left: 11px; background: linear-gradient(90deg, #999 1px, transparent 1px) 0 10px / 2px 1px repeat-x, linear-gradient(#999 1px, transparent 1px) 0 0 / 1px 2px repeat-y; }
.tree li:last-child { background: linear-gradient(90deg, #999 1px, transparent 1px) 0 10px / 2px 1px repeat-x, linear-gradient(#999 0 50%, transparent 50%) 0 0 / 1px 100% no-repeat; }
.tree li svg { background-color: #fff; }
.tree li span { line-height: 20px; padding: 0 2px; background: #fff; flex: 1; }
.tree .sel span { flex: none; background: #a9e5e8; color: #111; }
.tree .sel::after { content: ""; flex: 1; height: 20px; background: #fff; }
.tree .dim { color: #b9bdc0; }
.exp { position: absolute; left: -4px; top: 6px; width: 9px; height: 9px; border: 1px solid #9ab0bc; border-radius: 2px; background: #eef6fb; }
.exp svg { display: block; width: 7px; height: 7px; }
.sash { display: flex; flex-direction: column; gap: 9px; padding-top: 147px; }
.sash i { height: 93px; border: 1px solid #9fc4da; border-right: 0; border-radius: 4px 0 0 4px; display: grid; place-items: center; flex: none; }
.sash i.dark { background: #adbac5; border-color: #6f7e89; }
.sash i::after { content: ""; width: 3px; height: 3px; border: 1px solid #222; }

.canvas { flex: 1; min-width: 0; background: linear-gradient(#c0d6ea, #92accd 50%, #5877a5); }
.canvas svg { width: 100%; height: 100%; display: block; }
.disc { fill: #afbcc6; stroke: #f92e35; stroke-width: 1; }
.datum { fill: none; stroke: #9b6430; }
.dtext { font: 10px "DejaVu Sans Mono", monospace; fill: #9b6430; }
.axes { font: 9px "DejaVu Sans Mono", monospace; fill: #66707c; }

.sidebars { display: flex; gap: 1px; width: 76px; flex: none; background: linear-gradient(90deg, #dbe9f2 69px, #d6e3f0 69px); overflow: hidden; }
.vbar { width: 28px; }
.vbar.wide { width: 40px; }
.hgrip { display: block; height: 14px; background: conic-gradient(from 270deg, #3f7699 90deg, transparent 0) 0 0 / 2px 2px; clip-path: inset(4px 0 7px 0); }
.fly { position: relative; }
.fly::after { content: ""; position: absolute; left: 31px; top: 10px; border: 3px solid transparent; border-left: 4px solid #2b3942; border-right: 0; }
.fly.off::after { border-left-color: #a9b3ba; }

.side { display: flex; flex-direction: column; background: #fff; }
.manager { height: 200px; flex: none; padding: 8px 6px 7px 7px; background: linear-gradient(#99b4d3, #b9cde9 10%, #bccfec); border: 1px solid #111; border-bottom: 2px solid #10b9cf; border-right: 0; }
.manager h2 { line-height: 16px; padding-left: 3px; color: #111; height: 20px; }
.manager h3 { display: flex; align-items: center; gap: 6px; height: 18px; padding-left: 2px; background: #303c44; color: #fff; }
.tri.white { border-width: 6px 6px 0; border-top-color: #fff; }
.options { border: 1px solid #333; border-radius: 0 0 4px 4px; background: #fff; padding: 1px 2px 2px; display: flex; flex-direction: column; }
.options button { height: 23px; text-align: left; padding-left: 24px; }
.options .cur { background: #303c44; color: #fff; }
.options .bold { font-weight: bold; }
.options hr { width: 100%; margin: 0; border: 0; border-top: 1px solid #b3b3b3; }
.page { flex: 1; display: flex; justify-content: flex-end; }
.scroll { width: 13px; background: #f0f0f0; border-left: 1px solid #ddd; }
.thumb { display: block; height: 312px; border: 1px solid #999; border-top: 0; background: repeating-linear-gradient(#666 0 1px, transparent 1px 3px) 3px 104px / 6px 8px no-repeat, linear-gradient(90deg, #f5f5f5, #d3d3d5); }

.taskbar { grid-column: 1 / 3; display: flex; gap: 10px; padding-left: 52px; background: #b9cddd; border-top: 1px solid #3c4148; }
.taskbar i { width: 58px; background: #eef2f6; border: 1px solid #222; border-bottom: 0; }
.taskbar i:nth-child(2) { margin-left: 56px; }
.taskbar .y { width: 52px; background: #f5ee8e; margin-left: -6px; }

.ink { position: absolute; fill: none; stroke: #f00; stroke-linecap: round; stroke-linejoin: round; }
.circle { right: 171px; top: 267px; width: 62px; height: 48px; stroke-width: 7px; }
.loop { right: 41px; top: 112px; width: 98px; height: 42px; stroke-width: 6px; overflow: visible; }

.watermark { position: absolute; right: 5px; bottom: 5px; width: 206px; height: 62px; display: flex; background: rgba(255, 255, 255, .35); white-space: nowrap; }
.watermark svg { width: 60px; height: 60px; flex: none; }
.watermark div { display: flex; flex-direction: column; }
.watermark strong { font-size: 29px; line-height: 38px; padding-left: 10px; color: #a5dfb8; font-weight: 900; }
.watermark span { font: 15px/20px "Open Sans", sans-serif; color: #c3e4de; }
.orb { position: absolute; right: 0; bottom: 2px; width: 10px; height: 40px; }
```
